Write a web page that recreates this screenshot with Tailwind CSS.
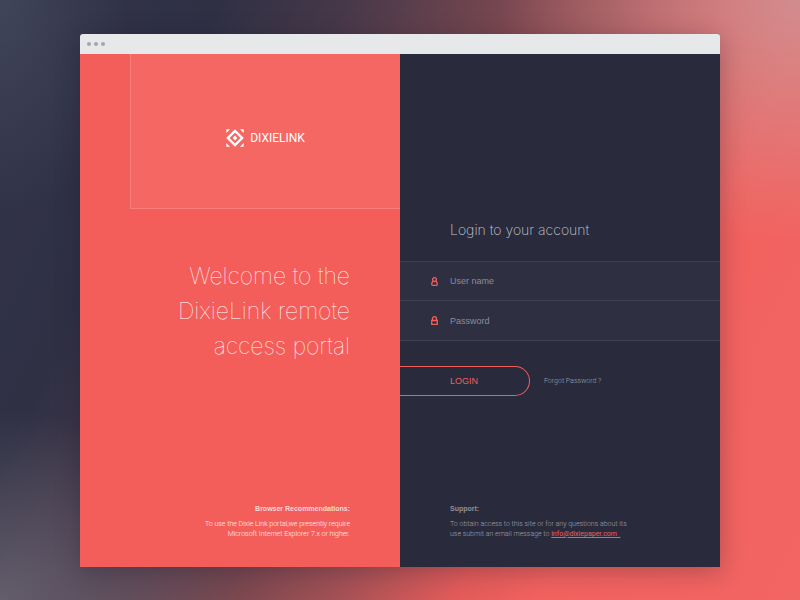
<!DOCTYPE html>
<html lang="en">
<head>
<meta charset="utf-8">
<meta name="viewport" content="width=device-width, initial-scale=1">
<title>DixieLink – Login</title>
<script src="https://cdn.jsdelivr.net/npm/@tailwindcss/browser@4"></script>
</head>
<body class="flex min-h-screen flex-col bg-[radial-gradient(ellipse_300px_240px_at_100%_0%,#c4a2a6aa,#c4a2a600),radial-gradient(ellipse_130px_220px_at_0%_0%,#50586a77,#50586a00),radial-gradient(ellipse_240px_190px_at_0%_100%,#77717eaa,#77717e00),linear-gradient(115deg,#32344a_0%,#2f3044_20%,#463849_32%,#74464f_46%,#a35155_57%,#e25b5a_68%,#f1625f_76%,#f16562_100%)] px-[10%] pt-[34px] pb-[33px] font-['Inter','Liberation_Sans',sans-serif]">
  <div class="flex grow flex-col rounded-t-[3px] shadow-[0_4px_24px_rgba(30,20,40,0.3)]">
    <header class="flex h-5 items-center gap-[3px] rounded-t-[3px] bg-[#e7e8ea] px-[7px]">
      <span class="size-1 rounded-full bg-[#a3a7aa]"></span>
      <span class="size-1 rounded-full bg-[#a3a7aa]"></span>
      <span class="size-1 rounded-full bg-[#a3a7aa]"></span>
    </header>
    <main class="grid grow grid-cols-2">
      <section class="flex flex-col bg-[#f35e5a] text-right text-white">
        <div class="ml-[50px] flex h-[155px] items-center justify-center gap-[6px] border-b border-l border-[#f77f7a] bg-[#f56762] pt-[14px]">
          <svg class="size-[18px]" viewBox="0 0 18 18" fill="none" aria-hidden="true">
            <path d="M9 1.9 16.1 9 9 16.1 1.9 9Z" stroke="#fff" stroke-width="2.4"/>
            <path d="M9 6.6 11.4 9 9 11.4 6.6 9Z" fill="#fff"/>
            <path d="M0.3 0.3H4L0.3 4ZM17.7 0.3V4L14 0.3ZM0.3 17.7V14L4 17.7ZM17.7 17.7H14L17.7 14Z" fill="#fff"/>
          </svg>
          <span class="font-['Roboto','Liberation_Sans',sans-serif] text-[12px] leading-4">DIXIELINK</span>
        </div>
        <h1 class="mt-[50px] px-[50px] text-[23px] leading-[35px] font-thin">Welcome to the<br>DixieLink remote<br>access portal</h1>
        <div class="mt-auto px-[50px] pb-7 text-[7px] leading-[10px]">
          <h2 class="mb-[5px] font-['Liberation_Sans',sans-serif] font-bold text-white/75">Browser Recommendations:</h2>
          <p class="font-['Roboto',sans-serif] font-light text-white/90">To use the Dixie Link portal,we presently require<br>Microsoft Internet Explorer 7.x or higher.</p>
        </div>
      </section>
      <section class="flex flex-col bg-[#292b3c] text-[#8f909c]">
        <h2 class="mt-[166px] px-[50px] text-[14px] leading-5 font-extralight text-[#c8c9d0]">Login to your account</h2>
        <form class="mt-[21px] font-['Liberation_Sans',sans-serif]">
          <div class="border-t border-b border-[#3f4153] bg-[#2e3042]">
            <label class="flex h-[39px] items-center gap-3 border-b border-[#3f4153] pl-[31px]">
              <svg class="h-[9px] w-[7px]" viewBox="0 0 7 9" fill="none" stroke="#f35e5a" stroke-width="1.3" role="img" aria-label="User name">
                <circle cx="3.5" cy="2.6" r="1.9"/>
                <path d="M2 4.2C0.9 5.2 0.7 6.2 0.7 7.3Q0.7 8.3 1.7 8.3H5.3Q6.3 8.3 6.3 7.3C6.3 6.2 6.1 5.2 5 4.2"/>
              </svg>
              <input type="text" name="username" placeholder="User name" class="min-w-0 grow bg-transparent text-[9px] leading-3 outline-none placeholder:text-[#8b8c99]">
            </label>
            <label class="flex h-[39px] items-center gap-3 pl-[31px]">
              <svg class="h-[9px] w-[7px]" viewBox="0 0 7 9" fill="none" stroke="#f35e5a" stroke-width="1.3" role="img" aria-label="Password">
                <path d="M0.7 4.5H6.3V8.3H0.7ZM1.5 4.5V2.7A2 2 0 0 1 5.5 2.7V4.5"/>
              </svg>
              <input type="password" name="password" placeholder="Password" class="min-w-0 grow bg-transparent text-[9px] leading-3 outline-none placeholder:text-[#8b8c99]">
            </label>
          </div>
          <div class="mt-[25px] flex items-center gap-[14px]">
            <button type="submit" class="h-[30px] w-[130px] rounded-r-full border border-l-0 border-[#f35e5a] pl-[50px] text-left text-[9px] leading-3 text-[#f35e5a]">LOGIN</button>
            <a href="#" class="font-['Roboto',sans-serif] text-[7px] leading-[10px] font-light text-[#a0a1ac]">Forgot Password ?</a>
          </div>
        </form>
        <div class="mt-auto px-[50px] pb-7 text-[7px] leading-[10px]">
          <h2 class="mb-[5px] font-['Liberation_Sans',sans-serif] font-bold">Support:</h2>
          <p class="font-['Roboto',sans-serif] font-light text-[#a0a1ac]">To obtain access to this site or for any questions about its<br>use submit an email message to <a href="mailto:info@dixiepaper.com" class="font-normal whitespace-pre text-[#f35e5a] underline">info@dixiepaper.com  </a></p>
        </div>
      </section>
    </main>
  </div>
</body>
</html>
